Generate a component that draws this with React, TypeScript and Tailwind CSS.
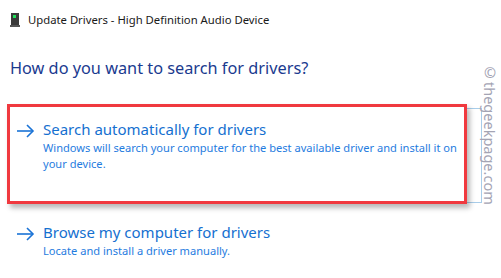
import React from 'react';

const DeviceIcon: React.FC = () => (
  <svg width="10" height="14" viewBox="0 0 10 14">
    <rect x="1" y="0" width="8" height="12" fill="#3a3a3a" />
    <rect x="3" y="2" width="3" height="3" fill="#22e05a" />
    <rect x="0" y="12" width="10" height="2" fill="#555" />
  </svg>
);

const Arrow: React.FC = () => (
  <svg width="18" height="14" viewBox="0 0 18 14" fill="none" stroke="#1a73d6" strokeWidth="1.6">
    <path d="M0 7h16" />
    <path d="M10 1l6 6-6 6" />
  </svg>
);

const Option: React.FC<{ title: string; desc: string }> = ({ title, desc }) => (
  <div className="flex gap-[8px]">
    <div className="pt-[5px]">
      <Arrow />
    </div>
    <div className="flex flex-col">
      <span className="text-[15px] leading-[21px] text-[#1570d0]">{title}</span>
      <span className="text-[11.1px] leading-[16px] text-[#1f7ce0] max-w-[420px]">{desc}</span>
    </div>
  </div>
);

export default function App() {
  return (
    <div className="relative w-[501px] h-[278px] bg-white overflow-hidden font-['Segoe_UI','Noto_Sans',sans-serif]">
      <div className="flex items-center gap-[8px] pl-[10px] pt-[12px]">
        <DeviceIcon />
        <span className="text-[11.3px] text-[#1a1a1a]">Update Drivers - High Definition Audio Device</span>
      </div>

      <div className="pl-[10px] pt-[27px] text-[16.3px] text-[#1a3a8f]">How do you want to search for drivers?</div>

      <div className="relative mt-[24px]">
        <div className="absolute left-[8px] top-[4px] w-[474px] h-[95px] border border-[#a8cdea]" />
        <div className="relative ml-[7px] w-[460px] h-[100px] border-[3px] border-[#f0393f] bg-white shadow-[3px_4px_5px_rgba(0,0,0,0.28)] pl-[7px] pt-[12px]">
          <Option
            title="Search automatically for drivers"
            desc="Windows will search your computer for the best available driver and install it on your device."
          />
        </div>
      </div>

      <div className="pl-[17px] pt-[18px]">
        <Option title="Browse my computer for drivers" desc="Locate and install a driver manually." />
      </div>

      <div className="absolute left-[481px] top-[62px] text-[14.5px] leading-[18px] text-[#a4a4b4] [writing-mode:vertical-rl]">
        ©thegeekpage.com
      </div>
    </div>
  );
}
